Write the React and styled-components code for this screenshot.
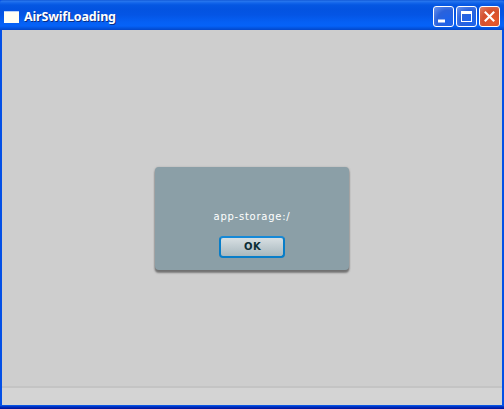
import React from "react";
import styled, { createGlobalStyle } from "styled-components";

const GlobalStyle = createGlobalStyle`
  * { box-sizing: border-box; }
  body { margin: 0; overflow: hidden; }
`;

const Window = styled.div`
  width: 504px;
  height: 409px;
  display: flex;
  flex-direction: column;
  background: #0450e6;
`;

const TitleBar = styled.header`
  flex: 0 0 30px;
  display: flex;
  align-items: center;
  padding: 3px 4px 0 4px;
  border-radius: 3px 3px 0 0;
  background: linear-gradient(#0a4fd0 0, #2a78ee 1px, #1264ea 3px, #0557e2 5px, #0353e0 9px, #0455e5 15px, #0560f4 22px, #0562f8 26px, #0355e0 28px, #0346c9 30px);
`;

const AppIcon = styled.span`
  width: 15px;
  height: 12px;
  background: #fffff4;
  border-top: 1px solid #b7d2f8;
`;

const Title = styled.h1`
  flex: 1;
  margin: 1px 0 0 5px;
  color: #fff;
  font: bold 12.5px/18px "Noto Sans", "Open Sans", sans-serif;
  letter-spacing: -0.16px;
  text-shadow: 1px 1px 0 #0a2f86;
  white-space: nowrap;
`;

const Controls = styled.div`
  display: flex;
  gap: 2px;
`;

const ControlButton = styled.button`
  width: 21px;
  height: 21px;
  padding: 0;
  border: 1px solid #fff;
  border-radius: 3px;
  background: ${(p) =>
    p.$danger
      ? "radial-gradient(circle at 70% 75%, #e5582c 10%, #d4502e 55%, #e08068 100%)"
      : "radial-gradient(circle at 75% 75%, #1d62ea 10%, #2a62dc 55%, #6c94ed 100%)"};
  svg { display: block; }
`;

const Client = styled.main`
  flex: 1;
  margin: 0 2px;
  display: flex;
  flex-direction: column;
  background: #cecece;
`;

const Stage = styled.div`
  flex: 1;
  display: flex;
  justify-content: center;
  align-items: flex-start;
  padding-top: 137px;
`;

const Dialog = styled.section`
  width: 194px;
  height: 103px;
  display: flex;
  flex-direction: column;
  align-items: center;
  padding-top: 43px;
  border-radius: 4px;
  background: #8b9fa7;
  box-shadow: 0 2px 2px #707070, 0 3px 2px #8e8e8e, 0 0 2px #aaa;
`;

const Message = styled.p`
  margin: 0;
  color: #fff;
  font: 10px/14px "DejaVu Sans", sans-serif;
  letter-spacing: 0.75px;
  white-space: nowrap;
`;

const OkButton = styled.button`
  width: 66px;
  height: 22px;
  margin-top: 12px;
  padding: 0 0 0 1px;
  border: 2px solid #087dc8;
  border-top-color: #1689d7;
  border-radius: 4px;
  background: linear-gradient(#d7dfe2, #bdc9ce 55%, #a9b8bd);
  color: #0b2d36;
  font: bold 10px/16px "DejaVu Sans", sans-serif;
  letter-spacing: 0.5px;
`;

const StatusBar = styled.footer`
  flex: 0 0 19px;
  border-top: 2px solid #c4c4c4;
  background: #d4d4d4;
`;

const BottomFrame = styled.div`
  flex: 0 0 4px;
  background: linear-gradient(#0754e4 0 1px, #0237c7 1px 2px, #0017a0 3px);
`;

export default function App() {
  return (
    <>
      <GlobalStyle />
      <Window>
        <TitleBar>
          <AppIcon />
          <Title>AirSwifLoading</Title>
          <Controls>
            <ControlButton aria-label="Minimize">
              <svg width="19" height="19"><path d="M4 12.5h7v3H4z" fill="#fff" /></svg>
            </ControlButton>
            <ControlButton aria-label="Maximize">
              <svg width="19" height="19"><path d="M4 4h11v11H4zM5 7v7h9V7z" fill="#fff" fillRule="evenodd" /></svg>
            </ControlButton>
            <ControlButton $danger aria-label="Close">
              <svg width="19" height="19"><path d="M4.8 4.8l9.4 9.4M14.2 4.8l-9.4 9.4" stroke="#fff" strokeWidth="2.1" /></svg>
            </ControlButton>
          </Controls>
        </TitleBar>
        <Client>
          <Stage>
            <Dialog role="alertdialog">
              <Message>app-storage:/</Message>
              <OkButton>OK</OkButton>
            </Dialog>
          </Stage>
          <StatusBar />
        </Client>
        <BottomFrame />
      </Window>
    </>
  );
}
